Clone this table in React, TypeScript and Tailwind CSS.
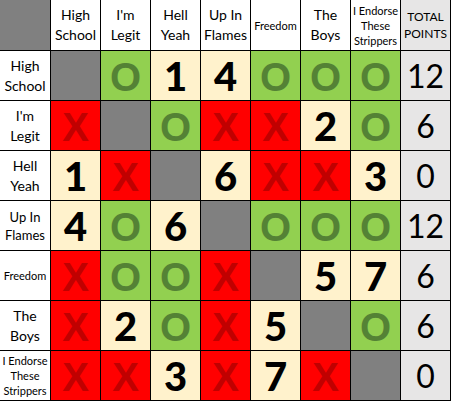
type Cell = 'G' | 'O' | 'X' | string

const TEAMS: { name: string[]; head: string; row: string }[] = [
  { name: ['High', 'School'], head: 'text-[14px] leading-5', row: 'text-[14px] leading-5' },
  { name: ["I'm", 'Legit'], head: 'text-[14px] leading-5', row: 'text-[14px] leading-5' },
  { name: ['Hell', 'Yeah'], head: 'text-[14px] leading-5', row: 'text-[14px] leading-5' },
  { name: ['Up In', 'Flames'], head: 'text-[14px] leading-5', row: 'text-[13px] leading-[18px]' },
  { name: ['Freedom'], head: 'text-[11px] leading-[15px]', row: 'text-[11px] leading-[15px]' },
  { name: ['The', 'Boys'], head: 'text-[14px] leading-5', row: 'text-[14px] leading-5' },
  { name: ['I Endorse', 'These', 'Strippers'], head: 'text-[11px] leading-[15px]', row: 'text-[11px] leading-[15px]' },
]

const ROWS: { cells: Cell[]; total: string }[] = [
  { cells: ['G', 'O', '1', '4', 'O', 'O', 'O'], total: '12' },
  { cells: ['X', 'G', 'O', 'X', 'X', '2', 'O'], total: '6' },
  { cells: ['1', 'X', 'G', '6', 'X', 'X', '3'], total: '0' },
  { cells: ['4', 'O', '6', 'G', 'O', 'O', 'O'], total: '12' },
  { cells: ['X', 'O', 'O', 'X', 'G', '5', '7'], total: '6' },
  { cells: ['X', '2', 'O', 'X', '5', 'G', 'O'], total: '6' },
  { cells: ['X', 'X', '3', 'X', '7', 'X', 'G'], total: '0' },
]

const MARK = "flex items-center justify-center pt-0.5 font-['Liberation_Sans',sans-serif] text-[40px] font-bold leading-none"

function ScoreCell({ v }: { v: Cell }) {
  if (v === 'G') return <div className="bg-[#808080]" />
  if (v === 'O') return <div className={`${MARK} bg-[#92d050] text-[#548235]`}>O</div>
  if (v === 'X') return <div className={`${MARK} bg-[#ff0000] text-[#c00000]`}>X</div>
  return (
    <div className="flex items-center justify-center bg-[#fff2cc] text-[40px] font-black leading-none text-black">{v}</div>
  )
}

export default function App() {
  return (
    <div
      className="grid w-[451px] grid-cols-[50px_repeat(8,49px)] grid-rows-[50px_repeat(7,49px)] gap-px bg-black pr-px pb-px"
      style={{ fontFamily: 'Lato, "Noto Sans", sans-serif' }}
    >
      {/* header row */}
      <div className="bg-[#808080]" />
      {TEAMS.map((t) => (
        <div key={t.name.join(' ')} className={`flex flex-col items-center justify-center bg-white text-black ${t.head}`}>
          {t.name.map((n) => (
            <span key={n}>{n}</span>
          ))}
        </div>
      ))}
      <div className="flex flex-col items-center justify-center bg-[#e7e6e6] text-[12px] leading-[17px] text-black">
        <span>TOTAL</span>
        <span>POINTS</span>
      </div>

      {/* body */}
      {ROWS.map((r, i) => (
        <div key={i} className="contents">
          <div className={`flex flex-col items-center justify-center bg-white text-black ${TEAMS[i].row}`}>
            {TEAMS[i].name.map((n) => (
              <span key={n}>{n}</span>
            ))}
          </div>
          {r.cells.map((c, j) => (
            <ScoreCell key={j} v={c} />
          ))}
          <div className="flex items-center justify-center bg-[#e7e6e6] text-[32px] leading-none text-black">{r.total}</div>
        </div>
      ))}
    </div>
  )
}
